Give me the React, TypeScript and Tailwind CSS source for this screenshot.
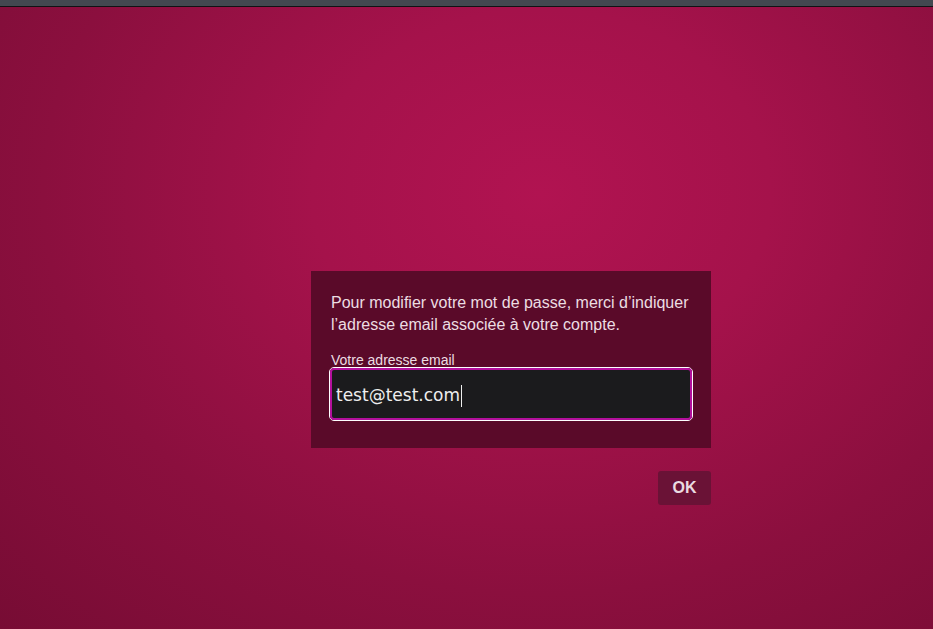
export default function App() {
    return (
        <div className="flex h-[629px] w-[933px] flex-col overflow-hidden font-['Liberation_Sans',Arial,sans-serif]">
            <div className="h-[6px] bg-[#434850]" />
            <div className="h-px bg-[#111214]" />
            <div className="flex flex-1 flex-col items-start bg-[radial-gradient(ellipse_at_58%_30%,#b11351_0%,#a5124b_30%,#8b0f3e_65%,#770c34_100%)] pl-[311px] pt-[264px]">
                <div className="w-[400px] bg-[#5a0a29] px-5 pt-[21px] pb-[27px]">
                    <p className="text-[16px] leading-[22px] text-[#ecdde2]">
                        Pour modifier votre mot de passe, merci d’indiquer l’adresse email associée à votre compte.
                    </p>
                    <label className="mt-[17px] block text-[14px] leading-[14px] text-[#ecdde2]">Votre adresse email</label>
                    <div className="-mx-[2px] rounded-[5px] border border-white">
                        <div className="flex h-[52px] items-center rounded-[4px] border-2 border-[#b3109c] bg-[#1b1b1d] pt-[3px] pl-[4px] font-['DejaVu_Sans',sans-serif] text-[17px] text-[#eeeeee]">
                            test@test.com
                            <span className="ml-px inline-block h-[22px] w-px bg-[#eeeeee]" />
                        </div>
                    </div>
                </div>
                <div className="mt-[23px] flex w-[400px] justify-end">
                    <button className="h-[34px] w-[53px] rounded-[3px] bg-[#6a1236] text-[16px] font-bold text-[#eadbe1]">OK</button>
                </div>
            </div>
        </div>
    );
}
